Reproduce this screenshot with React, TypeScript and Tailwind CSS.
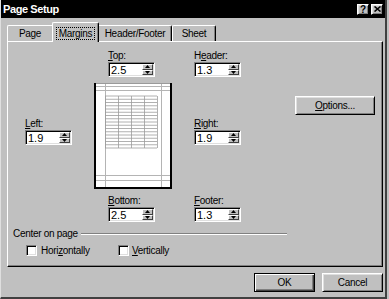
import type { ReactNode } from "react";

const raised =
  "border border-t-white border-l-white border-r-black border-b-black shadow-[inset_1px_1px_0_#dfdfdf,inset_-1px_-1px_0_#808080]";
const sunken =
  "border border-t-[#808080] border-l-[#808080] border-r-white border-b-white shadow-[inset_1px_1px_0_#000,inset_-1px_-1px_0_#dfdfdf]";

function Arrow({ up }: { up?: boolean }) {
  return (
    <svg width="5" height="3" viewBox="0 0 5 3" className="block">
      <path d={up ? "M2.5 0L5 3H0Z" : "M0 0H5L2.5 3Z"} fill="#000" />
    </svg>
  );
}

function Spinner({ label, value, className = "" }: { label: ReactNode; value: string; className?: string }) {
  return (
    <div className={`flex flex-col w-[47px] ${className}`}>
      <div className="h-[13px] leading-[13px] whitespace-nowrap">{label}</div>
      <div className={`h-[15px] flex bg-white ${sunken}`}>
        <div className="flex-1 pl-[2px] pt-[1px] leading-[12px] text-[11px] tracking-normal">{value}</div>
        <div className="w-[11px] flex flex-col my-[1px] mr-[1px]">
          <div className="flex-1 bg-[#c0c0c0] flex items-center justify-center border border-t-white border-l-white border-r-[#404040] border-b-[#404040]">
            <Arrow up />
          </div>
          <div className="flex-1 bg-[#c0c0c0] flex items-center justify-center border border-t-white border-l-white border-r-[#404040] border-b-[#404040]">
            <Arrow />
          </div>
        </div>
      </div>
    </div>
  );
}

function Preview() {
  const rows = Array.from({ length: 17 }, (_, i) => 13 + i * 3.25);
  const cols = [11, 24, 37, 50, 63];
  return (
    <svg width="78" height="106" viewBox="0 0 78 106" className="block mt-[6px]">
      <rect x="0" y="0" width="78" height="106" fill="#fff" />
      <line x1="0" y1="0.5" x2="78" y2="0.5" stroke="#9a9a9a" />
      <line x1="1" y1="0" x2="1" y2="106" stroke="#000" strokeWidth="2" />
      <line x1="77" y1="0" x2="77" y2="106" stroke="#000" strokeWidth="2" />
      <line x1="0" y1="105" x2="78" y2="105" stroke="#000" strokeWidth="2" />
      <g stroke="#b4b4b4" strokeWidth="1">
        <line x1="11.5" y1="1" x2="11.5" y2="104" />
        <line x1="67.5" y1="1" x2="67.5" y2="104" />
        <line x1="2" y1="3.5" x2="76" y2="3.5" />
        <line x1="2" y1="7.5" x2="76" y2="7.5" />
        <line x1="2" y1="92.5" x2="76" y2="92.5" />
        <line x1="2" y1="97.5" x2="76" y2="97.5" />
      </g>
      <g stroke="#9c9c9c" strokeWidth="0.8">
        {rows.map((y) => (
          <line key={y} x1="11" y1={y} x2="63" y2={y} />
        ))}
        {cols.map((x) => (
          <line key={x} x1={x + 0.5} y1="13" x2={x + 0.5} y2="65" />
        ))}
      </g>
    </svg>
  );
}

function Checkbox() {
  return <div className={`w-[11px] h-[11px] bg-white ${sunken}`} />;
}

export default function App() {
  return (
    <div className="w-[389px] h-[299px] bg-[#c0c0c0] font-['Liberation_Sans',Arial,sans-serif] text-[10px] tracking-[-0.3px] text-black">
      <div className="w-[387px] h-[299px] flex flex-col border-l border-l-[#dfdfdf] border-r-2 border-r-[#404040] border-b-2 border-b-[#404040]">
        {/* Title bar */}
        <div className="h-[18px] bg-black flex items-center pl-[2px] pr-[2px]">
          <span className="text-white font-bold text-[11px] tracking-[-0.4px]">Page Setup</span>
          <div className="ml-auto flex gap-[2px]">
            <div className={`w-[12px] h-[11px] bg-[#c0c0c0] flex items-center justify-center ${raised}`}>
              <span className="font-bold text-[10px] leading-[9px]">?</span>
            </div>
            <div className={`w-[12px] h-[11px] bg-[#c0c0c0] flex items-center justify-center ${raised}`}>
              <svg width="7" height="6" viewBox="0 0 7 6">
                <path d="M0.5 0.5L6.5 5.5M6.5 0.5L0.5 5.5" stroke="#000" strokeWidth="1.6" />
              </svg>
            </div>
          </div>
        </div>

        {/* Tabs */}
        <div className="mt-[4px] h-[19px] flex items-end pl-[6px]">
          <div className="w-[45px] h-[16px] flex items-center justify-center border-t border-l border-t-white border-l-white rounded-tl-[2px]">
            Page
          </div>
          <div className="relative z-10 -mb-px w-[47px] h-[20px] bg-[#c0c0c0] flex items-center justify-center pt-[2px] border-t border-l border-r border-t-white border-l-white border-r-black rounded-t-[2px] shadow-[inset_-1px_0_0_#808080]">
            <span className="border border-dotted border-black px-[2px] leading-[11px]">Margins</span>
          </div>
          <div className="w-[73px] h-[16px] flex items-center justify-center border-t border-r border-t-white border-r-black shadow-[inset_-1px_0_0_#808080] rounded-tr-[2px]">
            Header/Footer
          </div>
          <div className="w-[44px] h-[16px] flex items-center justify-center border-t border-l border-r border-t-white border-l-white border-r-black shadow-[inset_-1px_0_0_#808080] rounded-t-[2px]">
            Sheet
          </div>
        </div>

        {/* Tab panel */}
        <div className="ml-[6px] w-[376px] h-[226px] flex flex-col border border-t-white border-l-white border-r-black border-b-black shadow-[inset_-1px_-1px_0_#808080]">
          <div className="flex h-[182px] pl-[17px]">
            <div className="w-[47px] mt-[75px]">
              <Spinner label={<><u>L</u>eft:</>} value="1.9" />
            </div>
            <div className="ml-[22px] w-[78px] flex flex-col">
              <Spinner className="mt-[7px] ml-[14px]" label={<><u>T</u>op:</>} value="2.5" />
              <Preview />
              <Spinner className="mt-[5px] ml-[14px]" label={<><u>B</u>ottom:</>} value="2.5" />
            </div>
            <div className="ml-[22px] w-[48px] flex flex-col">
              <Spinner className="mt-[7px]" label={<>H<u>e</u>ader:</>} value="1.3" />
              <Spinner className="mt-[40px]" label={<><u>R</u>ight:</>} value="1.9" />
              <Spinner className="mt-[49px]" label={<><u>F</u>ooter:</>} value="1.3" />
            </div>
            <div className="ml-[53px] mt-[54px]">
              <div className={`w-[80px] h-[19px] flex items-center justify-center ${raised}`}>
                <span><u>O</u>ptions...</span>
              </div>
            </div>
          </div>

          {/* Center on page group */}
          <div className="mt-[3px] h-[13px] flex items-center pl-[5px]">
            <span className="leading-[13px]">Center on page</span>
            <div className="flex-1 ml-[3px] mr-[95px] h-[2px] border-t border-t-[#808080] border-b border-b-white" />
          </div>
          <div className="mt-[5px] flex items-center pl-[18px]">
            <div className="w-[92px] flex items-center">
              <Checkbox />
              <span className="ml-[4px] leading-[11px]">Hori<u>z</u>ontally</span>
            </div>
            <Checkbox />
            <span className="ml-[3px] leading-[11px]"><u>V</u>ertically</span>
          </div>
        </div>

        {/* Dialog buttons */}
        <div className="mt-[6px] flex justify-end gap-[7px] pr-[2px]">
          <div className="w-[61px] h-[19px] flex items-center justify-center border border-black shadow-[inset_1px_1px_0_#fff,inset_-1px_-1px_0_#404040,inset_-2px_-2px_0_#808080]">
            OK
          </div>
          <div className={`w-[61px] h-[19px] flex items-center justify-center ${raised}`}>Cancel</div>
        </div>
      </div>
    </div>
  );
}
